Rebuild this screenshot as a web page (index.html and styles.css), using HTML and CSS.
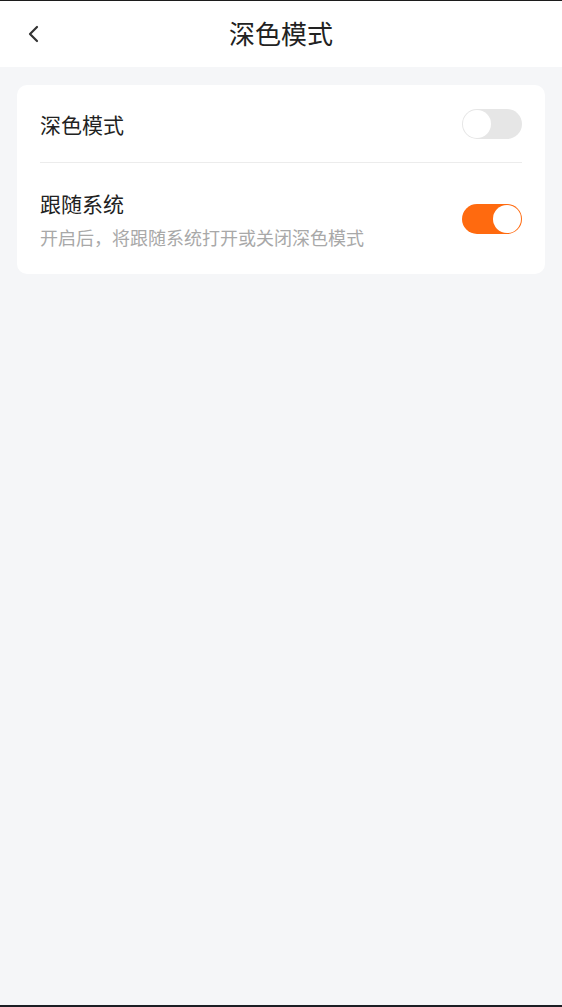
FILE: index.html
```html
<!DOCTYPE html>
<html lang="zh-CN">
<head>
    <meta charset="UTF-8">
    <meta name="viewport" content="width=device-width, initial-scale=1.0">
    <title>深色模式</title>
    <link rel="stylesheet" href="styles.css">
</head>
<body>
    <nav class="navbar">
        <span class="back">
            <svg width="14" height="20" viewBox="0 0 14 20"><path d="M10 3 L3 10 L10 17" fill="none" stroke="#333" stroke-width="2.2" stroke-linecap="round" stroke-linejoin="round"/></svg>
        </span>
        <h1>深色模式</h1>
    </nav>

    <div class="container">
        <div class="card">
            <div class="row">
                <div class="texto">
                    <p class="titulo">深色模式</p>
                </div>
                <span class="switch"></span>
            </div>
            <div class="row">
                <div class="texto">
                    <p class="titulo">跟随系统</p>
                    <p class="sub">开启后，将跟随系统打开或关闭深色模式</p>
                </div>
                <span class="switch on"></span>
            </div>
        </div>
    </div>
</body>
</html>
```

FILE: styles.css
```css
html, body {
    height: 100%;
}
body {
    font-family: "Noto Sans CJK SC", "Noto Sans", sans-serif;
    background-color: #f5f6f8;
    color: #222;
    margin: 0;
    padding: 0;
    border-top: 1px solid #1c1c1c;
    border-bottom: 2px solid #1c1e24;
    box-sizing: border-box;
}
.navbar {
    background-color: #fff;
    height: 66px;
    display: flex;
    justify-content: center;
    align-items: center;
    position: relative;
}
.navbar h1 {
    font-size: 26px;
    line-height: 34px;
    font-weight: normal;
    margin: 0 0 2px;
    color: #222;
}
.back {
    position: absolute;
    left: 27px;
    top: 23px;
}
.container {
    padding: 18px 17px;
}
.card {
    background-color: #fff;
    border-radius: 10px;
    padding: 0 23px;
}
.row {
    display: flex;
    align-items: center;
    justify-content: space-between;
}
.row:first-child {
    height: 77px;
    border-bottom: 1px solid #ececec;
}
.row:last-child {
    height: 111px;
}
.titulo {
    margin: 0;
    font-size: 21px;
    line-height: 28px;
    color: #222;
}
.sub {
    margin: 8px 0 0;
    font-size: 18px;
    line-height: 24px;
    color: #a8a8a8;
}
.switch {
    width: 60px;
    height: 30px;
    border-radius: 15px;
    background-color: #e6e6e6;
    position: relative;
    flex-shrink: 0;
}
.switch::after {
    content: "";
    position: absolute;
    top: 1px;
    left: 1px;
    width: 28px;
    height: 28px;
    border-radius: 50%;
    background-color: #fff;
}
.switch.on {
    background-color: #ff6a0f;
}
.switch.on::after {
    left: auto;
    right: 1px;
}
```
